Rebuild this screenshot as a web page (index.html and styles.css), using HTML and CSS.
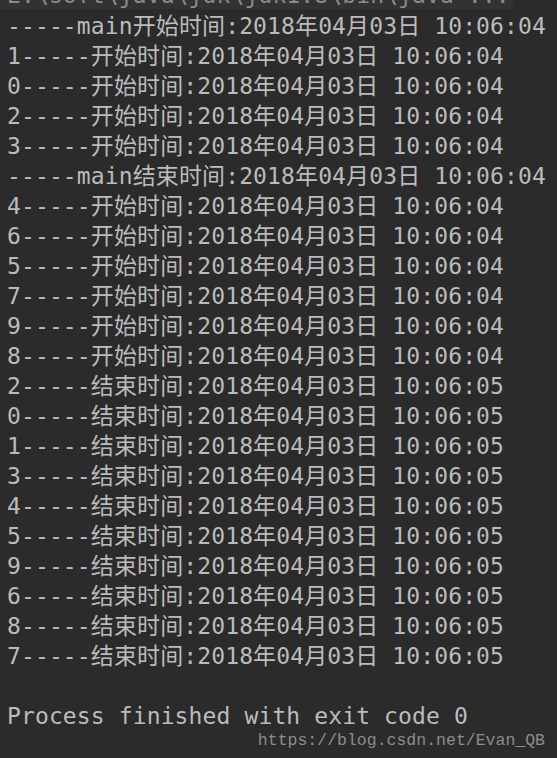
FILE: index.html
```html
<!DOCTYPE html>
<html lang="zh-CN">
<head>
    <meta charset="UTF-8">
    <title>Console Output</title>
    <link rel="stylesheet" href="styles.css">
</head>
<body>
    <section class="console">
        <div class="line command">E:\soft\java\jdk\jdk1.8\bin\java ...</div>
        <div class="line">-----main开始时间:2018年04月03日 10:06:04</div>
        <div class="line">1-----开始时间:2018年04月03日 10:06:04</div>
        <div class="line">0-----开始时间:2018年04月03日 10:06:04</div>
        <div class="line">2-----开始时间:2018年04月03日 10:06:04</div>
        <div class="line">3-----开始时间:2018年04月03日 10:06:04</div>
        <div class="line">-----main结束时间:2018年04月03日 10:06:04</div>
        <div class="line">4-----开始时间:2018年04月03日 10:06:04</div>
        <div class="line">6-----开始时间:2018年04月03日 10:06:04</div>
        <div class="line">5-----开始时间:2018年04月03日 10:06:04</div>
        <div class="line">7-----开始时间:2018年04月03日 10:06:04</div>
        <div class="line">9-----开始时间:2018年04月03日 10:06:04</div>
        <div class="line">8-----开始时间:2018年04月03日 10:06:04</div>
        <div class="line">2-----结束时间:2018年04月03日 10:06:05</div>
        <div class="line">0-----结束时间:2018年04月03日 10:06:05</div>
        <div class="line">1-----结束时间:2018年04月03日 10:06:05</div>
        <div class="line">3-----结束时间:2018年04月03日 10:06:05</div>
        <div class="line">4-----结束时间:2018年04月03日 10:06:05</div>
        <div class="line">5-----结束时间:2018年04月03日 10:06:05</div>
        <div class="line">9-----结束时间:2018年04月03日 10:06:05</div>
        <div class="line">6-----结束时间:2018年04月03日 10:06:05</div>
        <div class="line">8-----结束时间:2018年04月03日 10:06:05</div>
        <div class="line">7-----结束时间:2018年04月03日 10:06:05</div>
        <div class="line blank"></div>
        <div class="line">Process finished with exit code 0</div>
    </section>
    <div class="watermark">https://blog.csdn.net/Evan_QB</div>
</body>
</html>
```

FILE: styles.css
```css
html, body {
    height: 100%;
}

body {
    margin: 0;
    padding: 0;
    background-color: #2b2b2b;
    overflow: hidden;
    position: relative;
}

.console {
    display: flow-root;
    margin-top: -19px;
    padding-left: 7px;
    font-family: "DejaVu Sans Mono", "Noto Sans CJK SC", monospace;
    font-size: 23px;
    line-height: 30px;
    letter-spacing: 0.12px;
    color: #bbbbbb;
}

.line {
    white-space: pre;
}

.blank {
    height: 30px;
}

.command {
    width: fit-content;
    margin-left: -7px;
    padding: 0 3px 0 7px;
    line-height: 28px;
    margin-bottom: 2px;
    background-color: #323232;
    color: #8a8a8a;
}

.watermark {
    position: absolute;
    right: 12px;
    bottom: 8px;
    font-family: "Liberation Mono", "Noto Sans CJK SC", monospace;
    font-size: 16.5px;
    color: #8c8c8c;
}
```
